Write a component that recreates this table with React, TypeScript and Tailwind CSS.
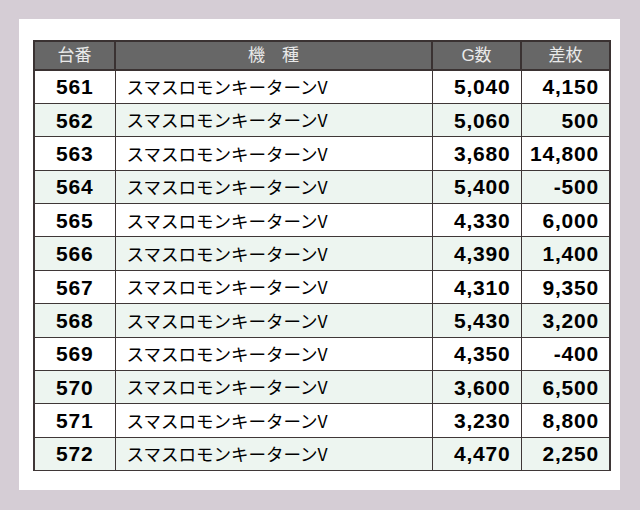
import React from 'react';

type Row = { no: number; games: string; diff: string };

const rows: Row[] = [
  { no: 561, games: '5,040', diff: '4,150' },
  { no: 562, games: '5,060', diff: '500' },
  { no: 563, games: '3,680', diff: '14,800' },
  { no: 564, games: '5,400', diff: '-500' },
  { no: 565, games: '4,330', diff: '6,000' },
  { no: 566, games: '4,390', diff: '1,400' },
  { no: 567, games: '4,310', diff: '9,350' },
  { no: 568, games: '5,430', diff: '3,200' },
  { no: 569, games: '4,350', diff: '-400' },
  { no: 570, games: '3,600', diff: '6,500' },
  { no: 571, games: '3,230', diff: '8,800' },
  { no: 572, games: '4,470', diff: '2,250' },
];

const MACHINE = 'スマスロモンキーターンV';

export default function App() {
  return (
    <div className="w-[640px] h-[510px] bg-[#d5cdd5] pt-[19px] pl-[19px] pr-[20px] pb-[20px]">
      <div className="w-full h-full bg-white pt-[21px] pl-[14px]">
        <table
          className="border-collapse table-fixed w-[576px]"
          style={{ fontFamily: '"Liberation Sans", Arial, "Noto Sans CJK JP", sans-serif' }}
        >
          <colgroup>
            <col className="w-[81px]" />
            <col className="w-[317px]" />
            <col className="w-[89px]" />
            <col className="w-[89px]" />
          </colgroup>
          <thead>
            <tr className="h-[29px] bg-[#676767] text-[#e9e9e9] text-[17px]">
              <th className="border-2 border-[#3a3232] font-normal text-center leading-none">台番</th>
              <th className="border-2 border-[#3a3232] font-normal text-center leading-none">機&emsp;種</th>
              <th className="border-2 border-[#3a3232] font-normal text-center leading-none">G数</th>
              <th className="border-2 border-[#3a3232] font-normal text-center leading-none">差枚</th>
            </tr>
          </thead>
          <tbody>
            {rows.map((r, i) => (
              <tr key={r.no} className={`h-[33.4px] ${i % 2 === 1 ? 'bg-[#edf5f0]' : 'bg-white'} text-black`}>
                <td className="border border-[#3f3737] border-l-2 text-center font-bold text-[21px] tracking-[0.8px] leading-none">
                  {r.no}
                </td>
                <td
                  className="border border-[#3f3737] pl-[11px] text-[17.5px] leading-none"
                  style={{ fontFamily: '"Noto Sans CJK JP", sans-serif' }}
                >
                  {MACHINE}
                </td>
                <td className="border border-[#3f3737] text-right pr-[10px] font-bold text-[21px] tracking-[0.8px] leading-none">
                  {r.games}
                </td>
                <td className="border border-[#3f3737] border-r-2 text-right pr-[10px] font-bold text-[21px] tracking-[0.8px] leading-none">
                  {r.diff}
                </td>
              </tr>
            ))}
          </tbody>
        </table>
      </div>
    </div>
  );
}
